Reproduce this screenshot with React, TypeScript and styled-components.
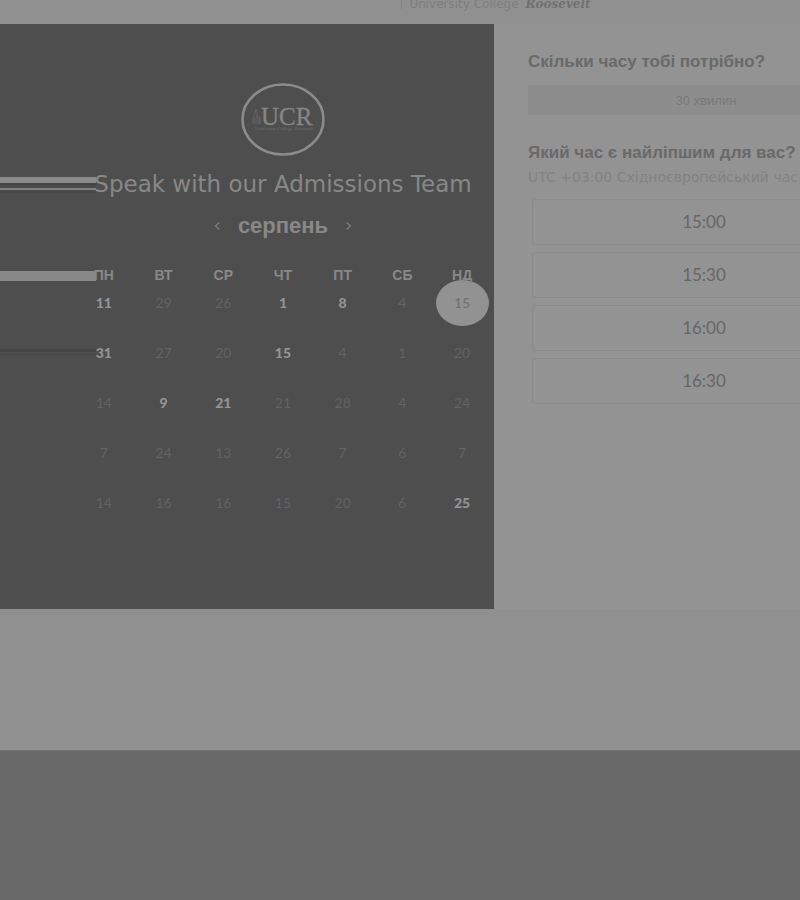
import React from "react";
import styled, { createGlobalStyle } from "styled-components";

const GlobalStyle = createGlobalStyle`
  *, *::before, *::after { box-sizing: border-box; }
  html, body, #root { height: 100%; }
  body {
    margin: 0;
    background: #909090;
    font-family: "Liberation Sans", Arial, sans-serif;
    color: #646464;
    overflow-x: hidden;
  }
  button { font: inherit; color: inherit; border: 0; padding: 0; background: none; cursor: pointer; }
`;

const Page = styled.div`
  min-height: 100%;
  display: flex;
  flex-direction: column;
`;

const Header = styled.header`
  height: 24px;
  overflow: hidden;
  display: flex;
  justify-content: center;
  gap: 7px;
  padding-left: 192px;
  font: 12px/8px "DejaVu Sans", sans-serif;
  color: #7e7e7e;
  white-space: nowrap;
`;

const Divider = styled.span`
  width: 1px;
  height: 9px;
  background: #828282;
`;

const Surname = styled.em`
  font: italic bold 12px/8px "DejaVu Serif", serif;
  color: #707070;
`;

const Booking = styled.main`
  display: grid;
  grid-template-columns: minmax(0, 494fr) minmax(0, 306fr);
  min-height: 585px;
`;

const CalendarPanel = styled.section`
  background: #4e4e4e;
  color: #888888;
  overflow: hidden;
  display: flex;
  flex-direction: column;
  align-items: flex-end;
  padding: 59px 2px 0 0;
`;

const CalendarColumn = styled.div`
  width: 418px;
  display: flex;
  flex-direction: column;
  align-items: center;
`;

const Logo = styled.svg`
  display: block;
  width: 84px;
  height: 73px;
`;

const stripes = {
  double: {
    top: 11,
    height: 16,
    fill: "linear-gradient(#8a8a8a 0 6px, #444444 6px 8px, #4a4a4a 8px 11px, #808080 11px 13px, #4a4a4a 13px)",
  },
  single: { top: 8, height: 10, fill: "#888888" },
  shadow: {
    top: 86,
    height: 6,
    fill: "linear-gradient(#444444 0 3px, #4e4e4e 3px 5px, #474747 5px)",
  },
};

const Stripe = styled.span<{ $kind: keyof typeof stripes }>`
  position: absolute;
  right: calc(100% - 22px);
  width: 100vw;
  top: ${(p) => stripes[p.$kind].top}px;
  height: ${(p) => stripes[p.$kind].height}px;
  background: ${(p) => stripes[p.$kind].fill};
`;

const TitleRow = styled.div`
  position: relative;
  width: 100%;
  height: 36px;
  margin-top: 10px;
`;

const Title = styled.h1`
  position: relative;
  margin: 0;
  text-align: center;
  white-space: nowrap;
  font: 400 23px/36px "DejaVu Sans", sans-serif;
`;

const MonthNav = styled.div`
  display: flex;
  align-items: center;
  gap: 16px;
  height: 32px;
  margin-top: 8px;
`;

const MonthName = styled.h2`
  margin: 0;
  font-size: 22px;
  line-height: 32px;
`;

const Arrow = styled.button`
  display: grid;
  place-items: center;
  width: 9px;
  height: 20px;
  svg { display: block; }
`;

const Calendar = styled.div`
  position: relative;
  width: 100%;
  margin-top: 21px;
`;

const DayTable = styled.table`
  width: 100%;
  table-layout: fixed;
  border-collapse: collapse;
  text-align: center;
`;

const Weekday = styled.th`
  height: 24px;
  padding: 0;
  font-size: 14px;
  line-height: 24px;
`;

const DayCell = styled.td`
  height: 50px;
  padding: 0;
  vertical-align: top;
`;

const Day = styled.button<{ $state: "open" | "off" | "picked" }>`
  display: grid;
  place-items: center;
  width: 53px;
  height: 46px;
  margin: -7px auto 0;
  border-radius: 50%;
  font: ${(p) => (p.$state === "open" ? 900 : 400)} 14px/20px Lato, sans-serif;
  color: ${(p) => (p.$state === "open" ? "#949494" : p.$state === "off" ? "#636363" : "#707070")};
  background: ${(p) => (p.$state === "picked" ? "#929292" : "none")};
`;

const TimePanel = styled.section`
  background: #939393;
  overflow: hidden;
  padding: 26px 0 0 34px;
`;

const TimeColumn = styled.div`
  width: 356px;
`;

const Question = styled.h3`
  margin: 0;
  font-size: 17px;
  line-height: 24px;
  color: #696969;
  white-space: nowrap;
`;

const Duration = styled.button`
  display: block;
  width: 100%;
  height: 30px;
  margin: 11px 0 26px;
  border-radius: 3px;
  background: #8d8d8d;
  color: #7a7a7a;
  font-size: 13px;
`;

const Zone = styled.p`
  margin: 0;
  font: 14px/24px "DejaVu Sans", sans-serif;
  color: #828282;
  white-space: nowrap;
`;

const Slots = styled.ul`
  list-style: none;
  margin: 10px 8px 0 4px;
  padding: 0;
  display: grid;
  gap: 7px;
`;

const Slot = styled.button`
  display: block;
  width: 100%;
  height: 46px;
  border: 1px solid #8b8b8b;
  border-radius: 3px;
  font: 17px/24px Lato, sans-serif;
  color: #666666;
`;

const Footer = styled.footer`
  flex: 1;
  min-height: 150px;
  margin-top: 141px;
  background: #696969;
  border-top: 1px solid #737373;
`;

const weekdays = ["ПН", "ВТ", "СР", "ЧТ", "ПТ", "СБ", "НД"];
const weeks = [
  [11, 29, 26, 1, 8, 4, 15],
  [31, 27, 20, 15, 4, 1, 20],
  [14, 9, 21, 21, 28, 4, 24],
  [7, 24, 13, 26, 7, 6, 7],
  [14, 16, 16, 15, 20, 6, 25],
];
const open = ["0-0", "0-3", "0-4", "1-0", "1-3", "2-1", "2-2", "4-6"];
const picked = "0-6";
const times = ["15:00", "15:30", "16:00", "16:30"];

function dayState(key: string): "open" | "off" | "picked" {
  if (key === picked) return "picked";
  return open.includes(key) ? "open" : "off";
}

function Chevron({ d }: { d: string }) {
  return (
    <svg width="9" height="10" viewBox="0 0 9 10" fill="none" stroke="#7c7c7c" strokeWidth="1.4" aria-hidden="true">
      <path d={d} />
    </svg>
  );
}

export default function App() {
  return (
    <>
      <GlobalStyle />
      <Page>
        <Header>
          <Divider />
          <span>University College</span>
          <Surname>Roosevelt</Surname>
        </Header>
        <Booking>
          <CalendarPanel>
            <CalendarColumn>
              <Logo viewBox="0 0 84 73" role="img" aria-label="UCR">
                <ellipse cx="42" cy="36.5" rx="40.5" ry="35" fill="none" stroke="#8c8c8c" strokeWidth="2.6" />
                <path d="M12 41V34l2-2v-3l1-3 1 3v4l3 1v7M14 34v7M16 33v8M18 35v6" fill="none" stroke="#696969" strokeWidth="0.8" />
                <text x="20" y="42" fill="#868686" stroke="#868686" strokeWidth="0.3" fontFamily="Liberation Serif" fontSize="25">
                  UCR
                </text>
                <text x="14" y="47" fill="#707070" fontFamily="Liberation Serif" fontSize="5">
                  University College <tspan fontStyle="italic">Roosevelt</tspan>
                </text>
              </Logo>
              <TitleRow>
                <Stripe $kind="double" />
                <Title>Speak with our Admissions Team</Title>
              </TitleRow>
              <MonthNav>
                <Arrow aria-label="Попередній місяць">
                  <Chevron d="M6.5 1.5 2.5 5l4 3.5" />
                </Arrow>
                <MonthName>серпень</MonthName>
                <Arrow aria-label="Наступний місяць">
                  <Chevron d="M2.5 1.5 6.5 5l-4 3.5" />
                </Arrow>
              </MonthNav>
              <Calendar>
                <DayTable>
                  <thead>
                    <tr>
                      {weekdays.map((d) => (
                        <Weekday key={d} scope="col">{d}</Weekday>
                      ))}
                    </tr>
                  </thead>
                  <tbody>
                    {weeks.map((week, r) => (
                      <tr key={r}>
                        {week.map((n, c) => (
                          <DayCell key={c}>
                            <Day $state={dayState(`${r}-${c}`)}>{n}</Day>
                          </DayCell>
                        ))}
                      </tr>
                    ))}
                  </tbody>
                </DayTable>
                <Stripe $kind="single" />
                <Stripe $kind="shadow" />
              </Calendar>
            </CalendarColumn>
          </CalendarPanel>
          <TimePanel>
            <TimeColumn>
              <Question>Скільки часу тобі потрібно?</Question>
              <Duration>30 хвилин</Duration>
              <Question>Який час є найліпшим для вас?</Question>
              <Zone>UTC +03:00 Східноєвропейський час</Zone>
              <Slots>
                {times.map((t) => (
                  <li key={t}>
                    <Slot>{t}</Slot>
                  </li>
                ))}
              </Slots>
            </TimeColumn>
          </TimePanel>
        </Booking>
        <Footer />
      </Page>
    </>
  );
}
